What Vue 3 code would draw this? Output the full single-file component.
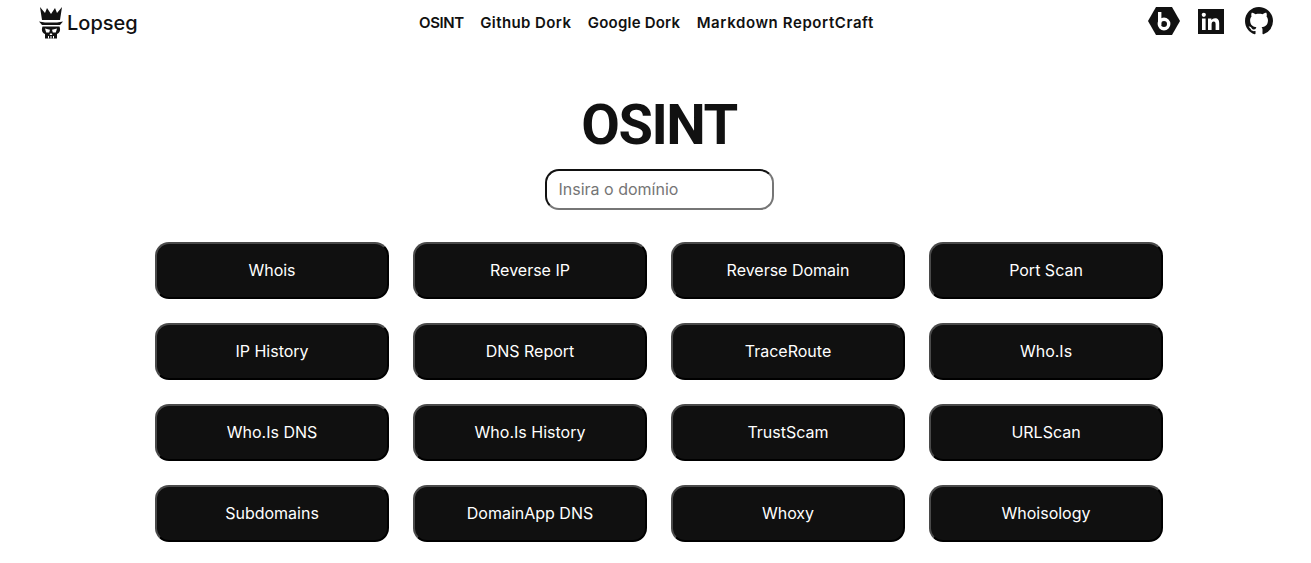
<script setup>
const links = ['OSINT', 'Github Dork', 'Google Dork', 'Markdown ReportCraft']
const tools = [
  'Whois', 'Reverse IP', 'Reverse Domain', 'Port Scan',
  'IP History', 'DNS Report', 'TraceRoute', 'Who.Is',
  'Who.Is DNS', 'Who.Is History', 'TrustScam', 'URLScan',
  'Subdomains', 'DomainApp DNS', 'Whoxy', 'Whoisology'
]
</script>

<template>
  <div class="page">
    <header class="nav">
      <a class="brand">
        <svg class="skull" viewBox="0 0 24 32" width="24" height="32">
          <path fill="#111" d="M1 0l5 6 2-5 4 6 4-6 2 5 5-6-2 13H3z" />
          <path fill="#111" d="M0 14.5l6 1h12l6-1-3 3.5H3z" />
          <path fill="#111" d="M3.500 19.500h17c1.200 3.400.6 6.200-2.500 7.500v4.500H6V27c-3.100-1.300-3.700-4.100-2.500-7.500z" />
          <path fill="#fff" d="M6 21.500l5 1.200-.8 2.800H7.200zM18 21.500l-5 1.200.8 2.800h3z" />
          <path fill="#fff" d="M11.200 26.500h1.600l.6 1.500h-2.800zM9 29h1v2.500H9zM11.500 29h1v2.500h-1zM14 29h1v2.500h-1z" />
        </svg>
        <span>Lopseg</span>
      </a>
      <nav class="links">
        <a v-for="l in links" :key="l">{{ l }}</a>
      </nav>
      <div class="socials">
        <svg viewBox="0 0 32 28" width="32" height="28">
          <path fill="#111" d="M8 0h16l8 14-8 14H8L0 14z" />
          <path fill="none" stroke="#fff" stroke-width="3.400" d="M11.700 5v13" />
          <circle cx="16" cy="17" r="4.700" fill="none" stroke="#fff" stroke-width="3.400" />
        </svg>
        <svg class="linkedin" viewBox="0 0 26 25" width="26" height="25">
          <rect width="26" height="25" fill="#111" />
          <rect x="4" y="9.500" width="3.600" height="11.500" fill="#fff" />
          <circle cx="5.800" cy="5.800" r="2.100" fill="#fff" />
          <path fill="#fff" d="M10 9.500h3.400v1.600c.7-1.100 2-1.900 3.600-1.900 3.100 0 4.200 2 4.200 5V21h-3.600v-5.800c0-1.500-.4-2.800-1.900-2.800s-2.100 1.200-2.100 2.800V21H10z" />
        </svg>
        <svg viewBox="0 0 16 16" width="28" height="28">
          <path fill="#111" d="M8 0C3.58 0 0 3.58 0 8c0 3.54 2.29 6.53 5.47 7.59.4.07.55-.17.55-.38 0-.19-.01-.82-.01-1.49-2.01.37-2.53-.49-2.69-.94-.09-.23-.48-.94-.82-1.13-.28-.15-.68-.52-.01-.53.63-.01 1.08.58 1.23.82.72 1.21 1.87.87 2.33.66.07-.52.28-.87.51-1.07-1.78-.2-3.64-.89-3.64-3.95 0-.87.31-1.59.82-2.15-.08-.2-.36-1.02.08-2.12 0 0 .67-.21 2.2.82.64-.18 1.32-.27 2-.27.68 0 1.36.09 2 .27 1.53-1.04 2.2-.82 2.2-.82.44 1.1.16 1.92.08 2.12.51.56.82 1.27.82 2.15 0 3.07-1.87 3.75-3.65 3.95.29.25.54.73.54 1.48 0 1.07-.01 1.93-.01 2.2 0 .21.15.46.55.38A8.013 8.013 0 0016 8c0-4.420-3.580-8-8-8z" />
        </svg>
      </div>
    </header>
    <main class="main">
      <h1>OSINT</h1>
      <input class="domain" type="text" placeholder="Insira o domínio" />
      <div class="grid">
        <button v-for="t in tools" :key="t" type="button">{{ t }}</button>
      </div>
    </main>
  </div>
</template>

<style scoped>
.page {
  width: 1311px;
  height: 563px;
  overflow: hidden;
  background: #fff;
  color: #111;
  font-family: Inter, "Liberation Sans", sans-serif;
}
.nav {
  display: flex;
  align-items: center;
  height: 45px;
  padding: 0 38px 0 39px;
}
.brand {
  display: flex;
  align-items: center;
  gap: 4px;
  width: 380px;
  font-size: 20px;
  font-weight: 500;
}
.skull { flex: none; }
.links {
  display: flex;
  gap: 16.5px;
  font-size: 15px;
  font-weight: 600;
  letter-spacing: 0.4px;
}
.links a:nth-child(1) { letter-spacing: -0.4px; }
.links a:nth-child(3) { letter-spacing: 0.2px; }
.links a:nth-child(4) { letter-spacing: 0.6px; }
.socials {
  display: flex;
  align-items: center;
  gap: 18px;
  margin-left: auto;
  margin-top: -3px;
}
.linkedin { margin-right: 3px; }
.main {
  display: flex;
  flex-direction: column;
  align-items: center;
  padding-left: 7px;
}
h1 {
  margin: 48px 0 0;
  font-family: Roboto, "Liberation Sans", sans-serif;
  font-size: 56px;
  line-height: 64px;
  font-weight: 700;
  letter-spacing: -1.5px;
}
.domain {
  box-sizing: border-box;
  width: 229px;
  height: 41px;
  margin-top: 12px;
  padding: 0 12px 1px;
  border: 2px solid;
  border-color: #111 #767676 #767676 #111;
  border-radius: 14px;
  outline: none;
  font: 400 16px Inter, "Liberation Sans", sans-serif;
  background: #fff;
}
.domain::placeholder { color: #757575; }
.grid {
  display: grid;
  grid-template-columns: repeat(4, 234px);
  gap: 24px;
  margin-top: 32px;
}
button {
  box-sizing: border-box;
  height: 57px;
  padding: 0 0 2px;
  border: 2px outset #4a4a4a;
  border-radius: 14px;
  background: #101010;
  color: #fff;
  font: 400 16px Inter, "Liberation Sans", sans-serif;
}
</style>
